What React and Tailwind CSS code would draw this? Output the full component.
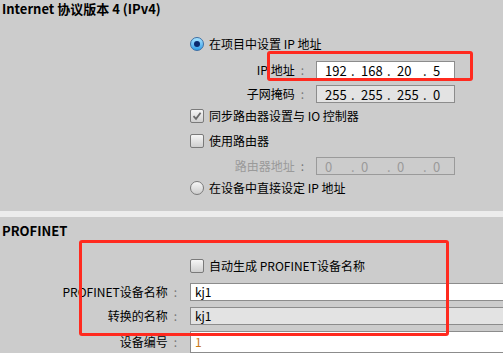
import React from "react";

const FONT = { fontFamily: '"Noto Sans CJK SC", "Noto Sans", sans-serif' };

const Radio = ({ checked }) => (
  <span
    className={`flex h-[14px] w-[14px] shrink-0 items-center justify-center rounded-full border ${checked ? "border-[#3a6ea5] bg-gradient-to-b from-[#a8e4ff] to-[#2a9ee8]" : "border-[#7a7a7a] bg-gradient-to-b from-[#f6f6f6] to-[#cdcdcd]"}`}
  >
    {checked && <span className="h-[6px] w-[6px] rounded-full bg-[#0b2a6e]" />}
  </span>
);

const Checkbox = ({ checked }) => (
  <span className="flex h-[14px] w-[14px] shrink-0 items-center justify-center rounded-[2px] border border-[#7a7a7a] bg-gradient-to-b from-[#f6f6f6] to-[#cfcfcf]">
    {checked && (
      <svg width="10" height="10" viewBox="0 0 10 10">
        <path d="M1.5 5.2 L4 7.8 L8.6 1.8" fill="none" stroke="#6a6a6a" strokeWidth="1.8" />
      </svg>
    )}
  </span>
);

const IpInput = ({ parts, bg = "bg-white", disabled }) => (
  <div
    className={`ml-[12px] flex h-[18px] w-[139px] items-center border pl-[8px] text-[13px] ${bg} ${disabled ? "border-[#9a9a9a] text-[#9a9a9a]" : "border-[#8c8c8c] text-black"}`}
  >
    {parts.map((p, i) => (
      <div key={i} className="flex w-[36px]">
        <span className="w-[26px]">{p}</span>
        {i < 3 && <span className="w-[10px]">.</span>}
      </div>
    ))}
  </div>
);

const FieldLabel = ({ text, width, disabled }) => (
  <div
    className={`flex shrink-0 items-center justify-end ${width} ${disabled ? "text-[#9a9a9a]" : "text-black"}`}
  >
    <span>{text}</span>
    <span className="ml-[6px] text-[#777]">:</span>
  </div>
);

const OptionRow = ({ control, text, mt }) => (
  <div className={`flex h-[16px] items-center gap-[5px] pl-[190px] ${mt}`}>
    {control}
    <span>{text}</span>
  </div>
);

export default function App() {
  return (
    <div
      className="relative h-[353px] w-[503px] overflow-hidden bg-[#cccccc] text-[12px] leading-none text-black"
      style={FONT}
    >
      {/* IPv4 section */}
      <div className="flex h-[17px] items-center pl-[2px] text-[13px] font-bold">
        Internet 协议版本 4 (IPv4)
      </div>

      <OptionRow control={<Radio checked />} text="在项目中设置 IP 地址" mt="mt-[19px]" />

      <div className="mt-[9px] flex items-center">
        <FieldLabel text="IP 地址" width="w-[304px]" />
        <IpInput parts={["192", "168", "20", "5"]} />
      </div>
      <div className="mt-[6px] flex items-center">
        <FieldLabel text="子网掩码" width="w-[304px]" />
        <IpInput parts={["255", "255", "255", "0"]} bg="bg-[#e3e3e3]" />
      </div>

      <OptionRow control={<Checkbox checked />} text="同步路由器设置与 IO 控制器" mt="mt-[5px]" />
      <OptionRow control={<Checkbox />} text="使用路由器" mt="mt-[9px]" />

      <div className="mt-[8px] flex items-center">
        <FieldLabel text="路由器地址" width="w-[304px]" disabled />
        <IpInput parts={["0", "0", "0", "0"]} bg="bg-transparent" disabled />
      </div>

      <OptionRow control={<Radio />} text="在设备中直接设定 IP 地址" mt="mt-[5px]" />

      <div className="mt-[15px] h-[6px] bg-[#ececec]" />

      {/* PROFINET section */}
      <div className="mt-[5px] flex h-[17px] items-center pl-[2px] text-[13px] font-bold">
        PROFINET
      </div>

      <OptionRow control={<Checkbox />} text="自动生成 PROFINET设备名称" mt="mt-[19px]" />

      <div className="mt-[9px] flex items-center">
        <FieldLabel text="PROFINET设备名称" width="w-[177px]" />
        <div className="ml-[13px] flex h-[18px] flex-1 items-center border border-r-0 border-[#8c8c8c] bg-white pl-[4px]">
          kj1
        </div>
      </div>
      <div className="mt-[6px] flex items-center">
        <FieldLabel text="转换的名称" width="w-[177px]" />
        <div className="ml-[13px] flex h-[18px] flex-1 items-center border border-r-0 border-[#8c8c8c] bg-[#e3e3e3] pl-[4px]">
          kj1
        </div>
      </div>
      <div className="mt-[6px] flex items-center">
        <FieldLabel text="设备编号" width="w-[177px]" />
        <div className="ml-[13px] flex h-[22px] flex-1 items-center border border-r-0 border-[#8c8c8c] bg-white pl-[4px] text-[#c87818]">
          1
        </div>
      </div>

      {/* Red annotation boxes */}
      <div className="absolute left-[267px] top-[51px] h-[30px] w-[206px] rounded-[3px] border-[3px] border-[#ff2a1f]" />
      <div className="absolute left-[79px] top-[240px] h-[96px] w-[370px] rounded-[3px] border-[3px] border-[#ff2a1f]" />
    </div>
  );
}
